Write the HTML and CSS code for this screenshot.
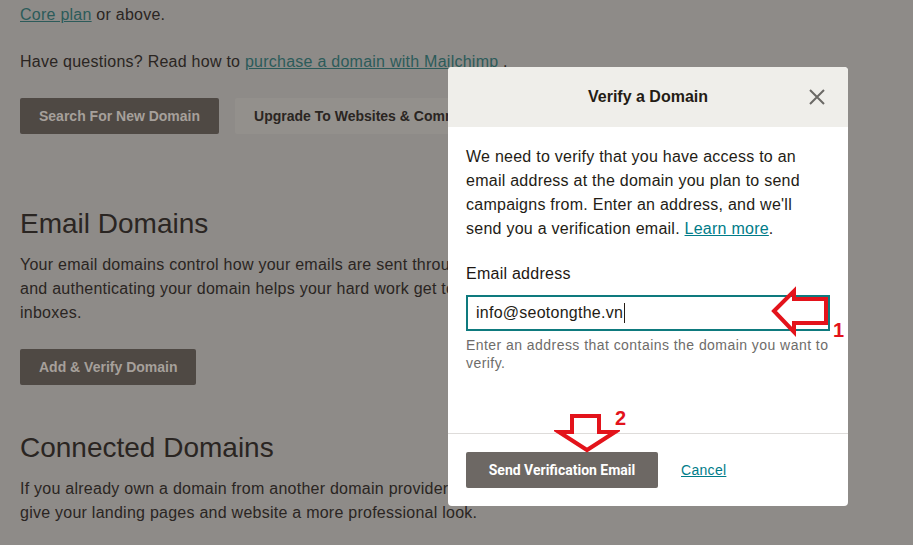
FILE: index.html
```html
<!DOCTYPE html>
<html lang="en">
<head>
	<meta charset="UTF-8">
	<title>Domains</title>
	<link rel="stylesheet" href="styles.css">
</head>
<body>
	<div id="page">
		<p class="first"><a href="#">Core plan</a> or above.</p>
		<p>Have questions? Read how to <a href="#">purchase a domain with Mailchimp</a> .</p>
		<div class="btns">
			<span class="btn dark">Search For New Domain</span>
			<span class="btn light">Upgrade To Websites &amp; Commerce</span>
		</div>

		<h2>Email Domains</h2>
		<p>Your email domains control how your emails are sent through Mailchimp,<br>
		and authenticating your domain helps your hard work get to subscribers'<br>
		inboxes.</p>
		<div class="btns">
			<span class="btn dark">Add &amp; Verify Domain</span>
		</div>

		<h2 class="second">Connected Domains</h2>
		<p>If you already own a domain from another domain provider, connect it to<br>
		give your landing pages and website a more professional look.</p>
	</div>

	<div id="modal">
		<div class="m-head">
			<span class="m-title">Verify a Domain</span>
			<svg class="m-close" width="16" height="16" viewBox="0 0 16 16"><path d="M1 1L15 15M15 1L1 15" stroke="#6b6966" stroke-width="2" fill="none"/></svg>
		</div>
		<div class="m-body">
			<p>We need to verify that you have access to an email address at the domain you plan to send campaigns from. Enter an address, and we'll send you a verification email. <a href="#">Learn more</a>.</p>
			<label>Email address</label>
			<div class="field">info@seotongthe.vn<span class="caret"></span></div>
			<p class="help">Enter an address that contains the domain you want to verify.</p>
		</div>
		<div class="m-foot">
			<span class="send">Send Verification Email</span>
			<a href="#">Cancel</a>
		</div>
	</div>

	<svg id="arrow1" width="64" height="52" viewBox="770 286 64 52">
		<path d="M774 311L794 291L794 299L826 299L826 323L794 323L794 332Z" fill="none" stroke="#e3131b" stroke-width="4"/>
	</svg>
	<span id="num1">1</span>
	<svg id="arrow2" width="66" height="44" viewBox="554 411 66 44">
		<path d="M572 416L599 416L599 432L615 432L587 450L559 432L572 432Z" fill="none" stroke="#e3131b" stroke-width="4"/>
	</svg>
	<span id="num2">2</span>
</body>
</html>
```

FILE: styles.css
```css
*{
	margin: 0;
	padding: 0;
	box-sizing: border-box;
}
body{
	background: #8e8b88;
	font-family: "Liberation Sans", Arial, sans-serif;
	color: #2a2522;
	font-size: 16px;
	line-height: 24px;
	letter-spacing: 0.25px;
	overflow: hidden;
}
a{
	color: #2c5b5a;
	text-decoration: underline;
}
#page{
	padding: 3px 20px 0;
}
#page .first{
	margin-bottom: 23px;
}
.btns{
	display: flex;
	gap: 16px;
	margin-top: 24px;
}
.btn{
	display: inline-block;
	height: 36px;
	line-height: 36px;
	padding: 0 19px;
	font-size: 14px;
	font-weight: bold;
	letter-spacing: 0;
	border-radius: 2px;
}
.btn.dark{
	background: #4f4944;
	color: #a6a09b;
}
.btn.light{
	background: #93908c;
	color: #2a2522;
}
h2{
	font-size: 28px;
	font-weight: normal;
	line-height: 36px;
	letter-spacing: 0;
	margin-top: 72px;
	margin-bottom: 11px;
}
h2.second{
	margin-top: 45px;
}
#modal{
	position: absolute;
	left: 448px;
	top: 67px;
	width: 400px;
	background: #fff;
	border-radius: 4px;
	overflow: hidden;
	color: #241c15;
}
.m-head{
	height: 60px;
	background: #efeeea;
	display: flex;
	align-items: center;
	justify-content: center;
	position: relative;
}
.m-title{
	font-weight: bold;
	font-size: 16px;
	letter-spacing: 0;
}
.m-close{
	position: absolute;
	right: 23px;
	top: 22px;
}
.m-body{
	padding: 18px 18px 0;
	height: 307px;
	border-bottom: 1px solid #dedcda;
}
.m-body a{
	color: #007c89;
}
.m-body label{
	display: block;
	margin-top: 21px;
	font-size: 16px;
	color: #1d1713;
}
.field{
	margin-top: 9px;
	height: 36px;
	border: 2px solid #0e7a7e;
	padding: 0 8px;
	font-size: 16px;
	display: flex;
	align-items: center;
}
.caret{
	display: inline-block;
	width: 1px;
	height: 20px;
	background: #241c15;
	margin-left: 1px;
}
.help{
	color: #6e6c6a;
	font-size: 14px;
	line-height: 18px;
	letter-spacing: 0.45px;
	margin-top: 5px;
}
.m-foot{
	padding: 18px;
	display: flex;
	align-items: center;
	gap: 23px;
}
.send{
	display: inline-block;
	width: 192px;
	height: 36px;
	line-height: 36px;
	text-align: center;
	background: #6d6864;
	color: #fff;
	font-family: Roboto, "Liberation Sans", sans-serif;
	font-weight: bold;
	font-size: 14px;
	letter-spacing: 0;
	border-radius: 2px;
}
.m-foot a{
	color: #007c89;
	font-size: 14px;
	letter-spacing: 0.3px;
}
#arrow1, #arrow2{
	position: absolute;
}
#arrow1{
	left: 770px;
	top: 286px;
}
#arrow2{
	left: 554px;
	top: 411px;
}
#num1, #num2{
	position: absolute;
	color: #e3131b;
	font-family: "Liberation Sans", Arial, sans-serif;
	font-weight: bold;
	font-size: 20px;
	line-height: 20px;
}
#num1{
	left: 833px;
	top: 320px;
}
#num2{
	left: 615px;
	top: 408px;
}
```
